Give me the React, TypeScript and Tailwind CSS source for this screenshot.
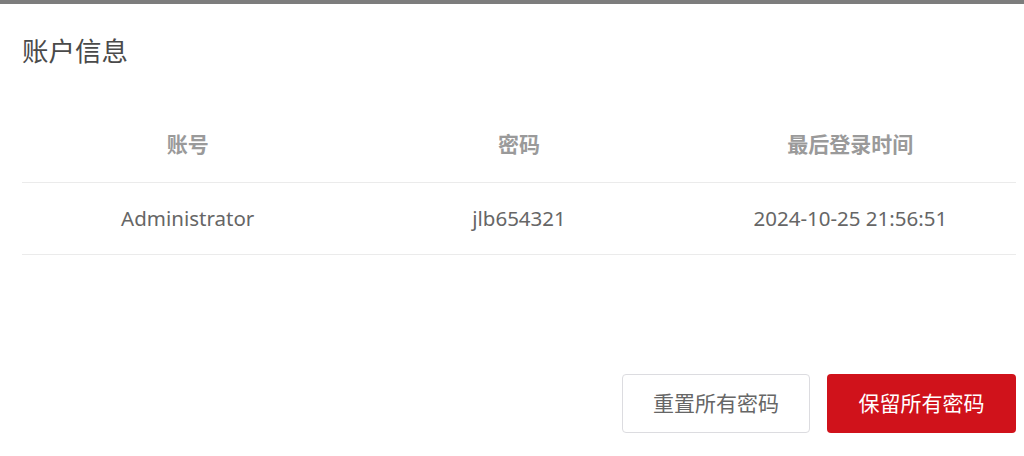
export default function App() {
  const font = { fontFamily: '"Noto Sans", "Noto Sans CJK SC", sans-serif' };
  return (
    <div className="w-[1024px] h-[456px] bg-white overflow-hidden flex flex-col" style={font}>
      <div className="h-[4px] bg-[#7d7d7d]" />
      <div className="pl-[22px] pr-[8px] flex flex-col flex-1">
        <div className="h-[100px] flex items-center text-[26.5px] text-[#4a4a4a] pb-[4px]">账户信息</div>
        <div className="grid grid-cols-3 h-[79px] items-center text-center text-[21px] font-semibold text-[#9a9a9a] border-b border-[#ebebeb] pt-[4px]">
          <div>账号</div>
          <div>密码</div>
          <div>最后登录时间</div>
        </div>
        <div className="grid grid-cols-3 h-[72px] items-center text-center text-[20.5px] text-[#666666] border-b border-[#ebebeb]">
          <div>Administrator</div>
          <div>jlb654321</div>
          <div>2024-10-25 21:56:51</div>
        </div>
        <div className="flex justify-end gap-[17px] mt-[119px]">
          <button className="w-[188px] h-[59px] rounded-[4px] border border-[#dcdce0] bg-white text-[21px] text-[#666666]">重置所有密码</button>
          <button className="w-[189px] h-[59px] rounded-[4px] bg-[#d0121b] text-[21px] text-white">保留所有密码</button>
        </div>
      </div>
    </div>
  );
}
